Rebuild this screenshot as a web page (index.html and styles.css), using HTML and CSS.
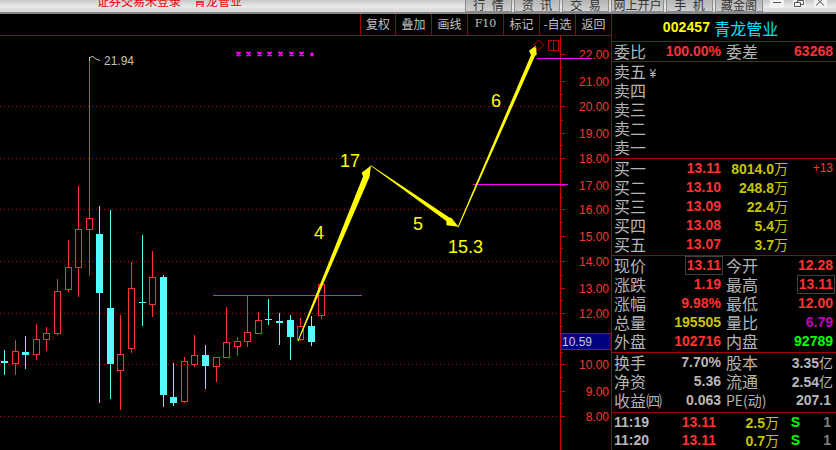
FILE: index.html
```html
<!DOCTYPE html>
<html lang="zh">
<head>
<meta charset="utf-8">
<title>青龙管业</title>
<link rel="stylesheet" href="styles.css">
</head>
<body>
<div class="app">
  <header class="titlebar">
    <div class="title"><span>证券交易未登录</span><span>青龙管业</span></div>
    <nav class="menu">
      <span class="menu-btn w47">行 情</span>
      <span class="menu-btn w46">资 讯</span>
      <span class="menu-btn w47">交 易</span>
      <span class="menu-btn w53">网上开户</span>
      <span class="menu-btn w47">手 机</span>
      <span class="menu-btn w48">藏金阁</span>
    </nav>
    <div class="win">
      <svg class="win-btn" width="14" height="8" viewBox="0 0 14 8"><rect class="w-face" width="14" height="8"/><path class="w-ink" d="M3 2.5H11"/></svg>
      <svg class="win-btn" width="12" height="8" viewBox="0 0 12 8"><rect class="w-face" width="12" height="8"/><path class="w-ink" d="M1.5 6.5V2.5H7.5V6.5ZM4.5 2V0.5H10.5V4.5H8"/></svg>
      <svg class="win-btn" width="13" height="8" viewBox="0 0 13 8"><rect class="w-face" width="13" height="8"/><path class="w-ink" d="M2 -2L10 5.5M10 -2L2 5.5"/></svg>
    </div>
  </header>
  <main class="main">
    <section class="chart-col">
      <div class="toolbar">
        <span class="tool w35">复权</span>
        <span class="tool w36">叠加</span>
        <span class="tool w36">画线</span>
        <span class="tool w36 f10">F10</span>
        <span class="tool w36">标记</span>
        <span class="tool w36">-自选</span>
        <span class="tool w36">返回</span>
      </div>
      <svg class="chart" width="611" height="414" viewBox="0 36 611 414">
        <g class="grid">
          <path d="M0 106.5H560M0 158.5H560M0 209.5H560M0 261.5H560M0 313.5H560M0 364.5H560M0 416.5H560"/>
        </g>
        <g class="down">
          <path d="M4.5 350V375M25.5 336V369M99.5 206V403M110.5 210V399M142.5 235V326M163.5 275V407M173.5 363V406M205.5 345V389M268.5 299V325M279.5 313V345M290.5 315V360M311.5 316V346"/>
          <rect x="1" y="361" width="7" height="2"/>
          <rect x="22" y="352" width="7" height="3"/>
          <rect x="96" y="234" width="7" height="59"/>
          <rect x="107" y="308" width="7" height="56"/>
          <rect x="139" y="302" width="7" height="1"/>
          <rect x="160" y="277" width="7" height="118"/>
          <rect x="170" y="397" width="7" height="6"/>
          <rect x="202" y="355" width="7" height="11"/>
          <rect x="265" y="319" width="7" height="1"/>
          <rect x="276" y="321" width="7" height="2"/>
          <rect x="287" y="320" width="7" height="17"/>
          <rect x="308" y="326" width="7" height="16"/>
        </g>
        <g class="up">
          <path d="M15.5 340V351M15.5 363V375M36.5 324V339M36.5 355V360M46.5 327V333M46.5 340V351M57.5 279V291M57.5 334V335M68.5 240V267M68.5 290V292M78.5 186V229M78.5 268V297M89.5 57V218M89.5 230V276M120.5 315V354M120.5 371V410M131.5 262V288M131.5 349V353M152.5 251V277M152.5 305V317M184.5 357V361M184.5 402V403M194.5 335V355M194.5 364V367M216.5 367V382M226.5 307V342M237.5 337V341M237.5 347V356M247.5 295V332M247.5 342V347M258.5 312V320M300.5 318V326M300.5 339V341M321.5 316V319"/>
          <rect x="12.5" y="351.5" width="6" height="12"/>
          <rect x="33.5" y="339.5" width="6" height="15"/>
          <rect x="43.5" y="333.5" width="6" height="6"/>
          <rect x="54.5" y="291.5" width="6" height="42"/>
          <rect x="65.5" y="267.5" width="6" height="22"/>
          <rect x="75.5" y="229.5" width="6" height="38"/>
          <rect x="86.5" y="218.5" width="6" height="11"/>
          <rect x="117.5" y="354.5" width="6" height="16"/>
          <rect x="128.5" y="288.5" width="6" height="60"/>
          <rect x="149.5" y="277.5" width="6" height="27"/>
          <rect x="181.5" y="361.5" width="6" height="40"/>
          <rect x="191.5" y="355.5" width="6" height="9"/>
          <rect x="213.5" y="357.5" width="6" height="9"/>
          <rect x="223.5" y="342.5" width="6" height="15"/>
          <rect x="234.5" y="341.5" width="6" height="5"/>
          <rect x="244.5" y="332.5" width="6" height="9"/>
          <rect x="255.5" y="320.5" width="6" height="13"/>
          <rect x="297.5" y="326.5" width="6" height="13"/>
          <rect x="318.5" y="284.5" width="6" height="31"/>
        </g>
        <path class="peak" d="M89.5 61V57.5L93 56.5L96 59L100 60.5"/>
        <text class="peak-text" x="104" y="65">21.94</text>
        <path class="marks" d="M236.5 52L240.5 56M240.5 52L236.5 56M246.5 52L250.5 56M250.5 52L246.5 56M257.5 52L261.5 56M261.5 52L257.5 56M267.5 52L271.5 56M271.5 52L267.5 56M278.5 52L282.5 56M282.5 52L278.5 56M289.5 52L293.5 56M293.5 52L289.5 56M299.5 52L303.5 56M303.5 52L299.5 56M310.5 53L313.5 56M313.5 53L310.5 56"/>
        <path class="axis" d="M560.5 36V450M561 54.5H565M561 81.5H565M561 106.5H565M561 133.5H565M561 158.5H565M561 185.5H565M561 209.5H565M561 236.5H565M561 261.5H565M561 288.5H565M561 313.5H565M561 364.5H565M561 391.5H565M561 416.5H565M561 67.5H563M561 94.5H563M561 120.5H563M561 145.5H563M561 171.5H563M561 197.5H563M561 222.5H563M561 248.5H563M561 275.5H563M561 300.5H563M561 326.5H563M561 352.5H563M561 377.5H563M561 403.5H563"/>
        <g class="axis-labels">
          <text x="609" y="59">22.00</text>
          <text x="609" y="86">21.00</text>
          <text x="609" y="111">20.00</text>
          <text x="609" y="138">19.00</text>
          <text x="609" y="163">18.00</text>
          <text x="609" y="190">17.00</text>
          <text x="609" y="214">16.00</text>
          <text x="609" y="241">15.00</text>
          <text x="609" y="266">14.00</text>
          <text x="609" y="293">13.00</text>
          <text x="609" y="318">12.00</text>
          <text x="609" y="369">10.00</text>
          <text x="609" y="396">9.00</text>
          <text x="609" y="421">8.00</text>
        </g>
        <path class="magenta" d="M537 58.5H590M473 184.5H568M213 295.5H362"/>
        <polygon class="arrow" points="297.5,341 363,176.5 361.7,172.7 371,165.5 369.5,177 298.5,341.3"/>
        <polygon class="arrow" points="371,165.2 449,217.2 451.5,218 458.5,226.8 446.5,225.2 446.3,221 370.6,165.8"/>
        <polygon class="arrow" points="457.6,227 531,55 529,50.7 536,45.5 536.7,54.5 535,56 458.6,227.2"/>
        <path class="drawn" d="M538.5 40L543.5 45L538.5 50.5L533.5 45ZM548.5 40.5H558.5V50.5H548.5ZM553.5 40.5V50.5"/>
        <g class="notes">
          <text x="340" y="167">17</text>
          <text x="314" y="239">4</text>
          <text x="413" y="230">5</text>
          <text x="491" y="107">6</text>
          <text x="448" y="253">15.3</text>
        </g>
        <rect class="cross-box" x="561" y="333.5" width="50" height="16"/>
        <text class="cross-text" x="562" y="346">10.59</text>
      </svg>
    </section>
    <aside class="panel">
      <div class="stock"><b class="code">002457</b><span class="name">青龙管业</span></div>
      <div class="block first">
        <div class="pair-row">
          <div class="pair"><span class="lab">委比</span><b class="num red">100.00%</b></div>
          <div class="pair"><span class="lab">委差</span><b class="num red">63268</b></div>
        </div>
      </div>
      <div class="block">
        <div class="book"><span class="lab">卖五 <small class="yen">¥</small></span></div>
        <div class="book"><span class="lab">卖四</span></div>
        <div class="book"><span class="lab">卖三</span></div>
        <div class="book"><span class="lab">卖二</span></div>
        <div class="book"><span class="lab">卖一</span></div>
      </div>
      <div class="block">
        <div class="book"><span class="lab">买一</span><b class="num red">13.11</b><b class="num olive">8014.0<i class="wan">万</i></b><span class="delta">+13</span></div>
        <div class="book"><span class="lab">买二</span><b class="num red">13.10</b><b class="num olive">248.8<i class="wan">万</i></b></div>
        <div class="book"><span class="lab">买三</span><b class="num red">13.09</b><b class="num olive">22.4<i class="wan">万</i></b></div>
        <div class="book"><span class="lab">买四</span><b class="num red">13.08</b><b class="num olive">5.4<i class="wan">万</i></b></div>
        <div class="book"><span class="lab">买五</span><b class="num red">13.07</b><b class="num olive">3.7<i class="wan">万</i></b></div>
      </div>
      <div class="block">
        <div class="pair-row">
          <div class="pair"><span class="lab">现价</span><b class="num red boxed">13.11</b></div>
          <div class="pair"><span class="lab">今开</span><b class="num red">12.28</b></div>
        </div>
        <div class="pair-row">
          <div class="pair"><span class="lab">涨跌</span><b class="num red">1.19</b></div>
          <div class="pair"><span class="lab">最高</span><b class="num red boxed">13.11</b></div>
        </div>
        <div class="pair-row">
          <div class="pair"><span class="lab">涨幅</span><b class="num red">9.98%</b></div>
          <div class="pair"><span class="lab">最低</span><b class="num red">12.00</b></div>
        </div>
        <div class="pair-row">
          <div class="pair"><span class="lab">总量</span><b class="num olive">195505</b></div>
          <div class="pair"><span class="lab">量比</span><b class="num purple">6.79</b></div>
        </div>
        <div class="pair-row">
          <div class="pair"><span class="lab">外盘</span><b class="num red">102716</b></div>
          <div class="pair"><span class="lab">内盘</span><b class="num green">92789</b></div>
        </div>
      </div>
      <div class="block last">
        <div class="pair-row">
          <div class="pair"><span class="lab">换手</span><b class="num grey">7.70%</b></div>
          <div class="pair"><span class="lab">股本</span><b class="num grey">3.35<i class="yi">亿</i></b></div>
        </div>
        <div class="pair-row">
          <div class="pair"><span class="lab">净资</span><b class="num grey">5.36</b></div>
          <div class="pair"><span class="lab">流通</span><b class="num grey">2.54<i class="yi">亿</i></b></div>
        </div>
        <div class="pair-row">
          <div class="pair"><span class="lab">收益㈣</span><b class="num grey">0.063</b></div>
          <div class="pair"><span class="lab pe">PE(动)</span><b class="num grey pad2">207.1</b></div>
        </div>
      </div>
      <div class="ticks">
        <div class="tick"><b class="num grey">11:19</b><b class="num red">13.11</b><b class="num olive">2.5<i class="wan">万</i></b><b class="num green">S</b><b class="num dim">1</b></div>
        <div class="tick"><b class="num grey">11:20</b><b class="num red">13.11</b><b class="num olive">0.7<i class="wan">万</i></b><b class="num green">S</b><b class="num dim">1</b></div>
      </div>
    </aside>
  </main>
</div>
</body>
</html>
```
FILE: styles.css
```css
* { box-sizing: border-box; }
html, body { margin: 0; padding: 0; background: #000; }
.app {
  width: 836px;
  height: 450px;
  overflow: hidden;
  background: #000;
  font-family: "Liberation Sans", "Noto Sans CJK SC", sans-serif;
}

/* title bar */
.titlebar {
  height: 14px;
  display: flex;
  overflow: hidden;
  background: linear-gradient(#c9c9cc, #e9e9ea 55%, #dcdcde 85%);
  border-bottom: 2px solid #85888a;
}
.title {
  width: 465px;
  padding-left: 97px;
  display: flex;
  gap: 13px;
  color: #f00000;
  font: 12px/12px "Noto Sans CJK SC", sans-serif;
  margin-top: -5px;
}
.menu { display: flex; gap: 2px; }
.menu-btn {
  height: 12px;
  overflow: hidden;
  text-align: center;
  color: #333;
  font: 12px/9px "Noto Sans CJK SC", sans-serif;
  word-spacing: 4px;
  background: linear-gradient(#b5b5b5, #cfcfcf);
  border-left: 1px solid #8c8c8c;
  border-right: 1px solid #8c8c8c;
  border-bottom: 1px solid #8c8c8c;
}
.w46 { width: 46px; }
.w47 { width: 47px; }
.w48 { width: 48px; }
.w53 { width: 53px; }
.win {
  margin-left: 7px;
  display: flex;
  gap: 9px;
}
.win-btn { display: block; }
.w-face { fill: #f2f2f2; }
.w-ink { fill: none; stroke: #555; stroke-width: 1; }

/* main */
.main { display: flex; height: 436px; }
.chart-col { width: 611px; flex: none; }
.toolbar {
  height: 22px;
  display: flex;
  justify-content: flex-end;
  border-bottom: 1px solid #b00000;
}
.tool {
  height: 21px;
  border-left: 1px solid #a00000;
  color: #c0c0c0;
  font: 12px/20px "Noto Sans CJK SC", sans-serif;
  text-align: center;
  white-space: nowrap;
}
.w35 { width: 35px; }
.w36 { width: 36px; }
.f10 { font: 11px/20px "DejaVu Serif", serif; }

/* chart */
.chart { display: block; }
.grid path { stroke: #c00000; stroke-width: 1; stroke-dasharray: 1 3; fill: none; }
.up path, .up rect { stroke: #ff3232; stroke-width: 1; fill: none; }
.down path { stroke: #54ffff; stroke-width: 1; fill: none; }
.down rect { fill: #54ffff; }
.peak { fill: none; stroke: #c0c0c0; stroke-width: 1; }
.peak-text { fill: #c0c0c0; font: 12px "Liberation Sans", sans-serif; }
.marks { stroke: #ff00ff; stroke-width: 1.8; fill: none; }
.axis { stroke: #c80000; stroke-width: 1; fill: none; }
.axis-labels text { fill: #ff3232; font: 12px "Liberation Sans", sans-serif; text-anchor: end; }
.magenta { stroke: #ff00ff; stroke-width: 1; fill: none; }
.arrow { fill: #ffff00; }
.drawn { fill: none; stroke: #c00000; stroke-width: 1; }
.notes text { fill: #ffff00; font: 18px "Liberation Sans", sans-serif; }
.cross-box { fill: #000080; stroke: #c00000; stroke-width: 1; }
.cross-text { fill: #c8c8d8; font: 12px "Liberation Sans", sans-serif; }

/* right panel */
.panel {
  width: 225px;
  flex: none;
  border-left: 1px solid #a00000;
  font: bold 14px/19px "Liberation Sans", sans-serif;
}
.stock {
  height: 28px;
  display: flex;
  justify-content: center;
  align-items: center;
  gap: 4px;
  padding-right: 7px;
  border-bottom: 1px solid #a00000;
}
.code { color: #ffff00; letter-spacing: 0.1px; }
.name { color: #00e0ff; font: 16px/20px "Noto Sans CJK SC", sans-serif; }
.block { border-bottom: 1px solid #a00000; padding-bottom: 1px; }
.block.first { padding-bottom: 0; }
.block.last { padding-bottom: 2px; }
.pair-row { display: flex; gap: 5px; padding-left: 2px; height: 19px; }
.pair {
  width: 107px;
  display: flex;
  justify-content: space-between;
}
.lab {
  color: #b4b4b4;
  font: 400 16px/18px "Noto Sans CJK SC", sans-serif;
  white-space: nowrap;
}
.pe { font-size: 14px; }
.yen { font: 12px/18px "Liberation Sans", sans-serif; }
.num { white-space: nowrap; }
.red { color: #ff3232; }
.olive { color: #c4c400; }
.purple { color: #c000c0; }
.green { color: #00ff00; }
.grey { color: #b8b8b8; }
.dim { color: #808080; }
.pad2 { padding-right: 2px; }
.boxed { outline: 1px solid #404040; outline-offset: 1px; line-height: 15px; height: 15px; margin-top: 2px; }
.wan, .yi { font: 400 14px/19px "Noto Sans CJK SC", sans-serif; }
.book {
  height: 19px;
  padding-left: 2px;
  display: grid;
  grid-template-columns: 45px 62px 67px 45px;
}
.book .num { text-align: right; }
.delta { color: #ff3232; font: 12px/19px "Liberation Sans", sans-serif; text-align: right; }
.ticks { padding-top: 0; }
.tick {
  height: 18px;
  padding-left: 2px;
  display: grid;
  grid-template-columns: 50px 52px 63px 21px 31px;
  line-height: 18px;
}
.tick .red, .tick .olive, .tick .dim { text-align: right; }
.tick .green { text-align: right; }
```
